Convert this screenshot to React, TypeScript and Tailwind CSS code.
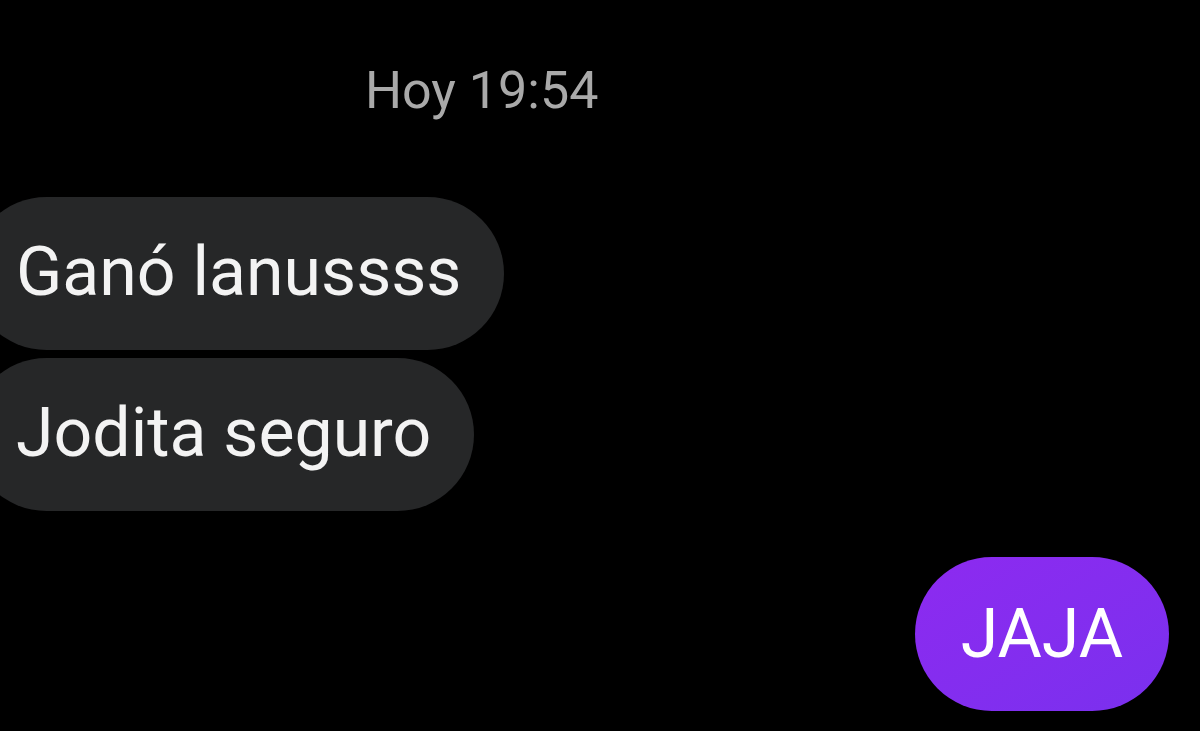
const incoming = ["Ganó lanussss", "Jodita seguro"];

export default function App() {
  return (
    <main className="h-[731px] w-[1200px] overflow-hidden bg-black font-['Roboto','Noto_Sans',sans-serif]">
      <div className="flex h-[197px] items-start pl-[365px] pt-[62px]">
        <p className="text-[52px] leading-[58px] text-[#a9a9a9]">Hoy 19:54</p>
      </div>

      <div className="flex flex-col items-start gap-[8px]">
        {incoming.map((msg) => (
          <div
            key={msg}
            className="ml-[-30px] flex h-[153px] items-center rounded-full bg-[#262728] pb-[4px] pl-[46px] pr-[43px]"
          >
            <span className="text-[68px] leading-none text-[#f3f3f3]">{msg}</span>
          </div>
        ))}
      </div>

      <div className="mt-[46px] flex justify-end pr-[31px]">
        <div className="flex h-[154px] items-center rounded-full bg-gradient-to-br from-[#8d2af0] to-[#7a30ee] px-[46px]">
          <span className="text-[68px] leading-none text-white">JAJA</span>
        </div>
      </div>
    </main>
  );
}
